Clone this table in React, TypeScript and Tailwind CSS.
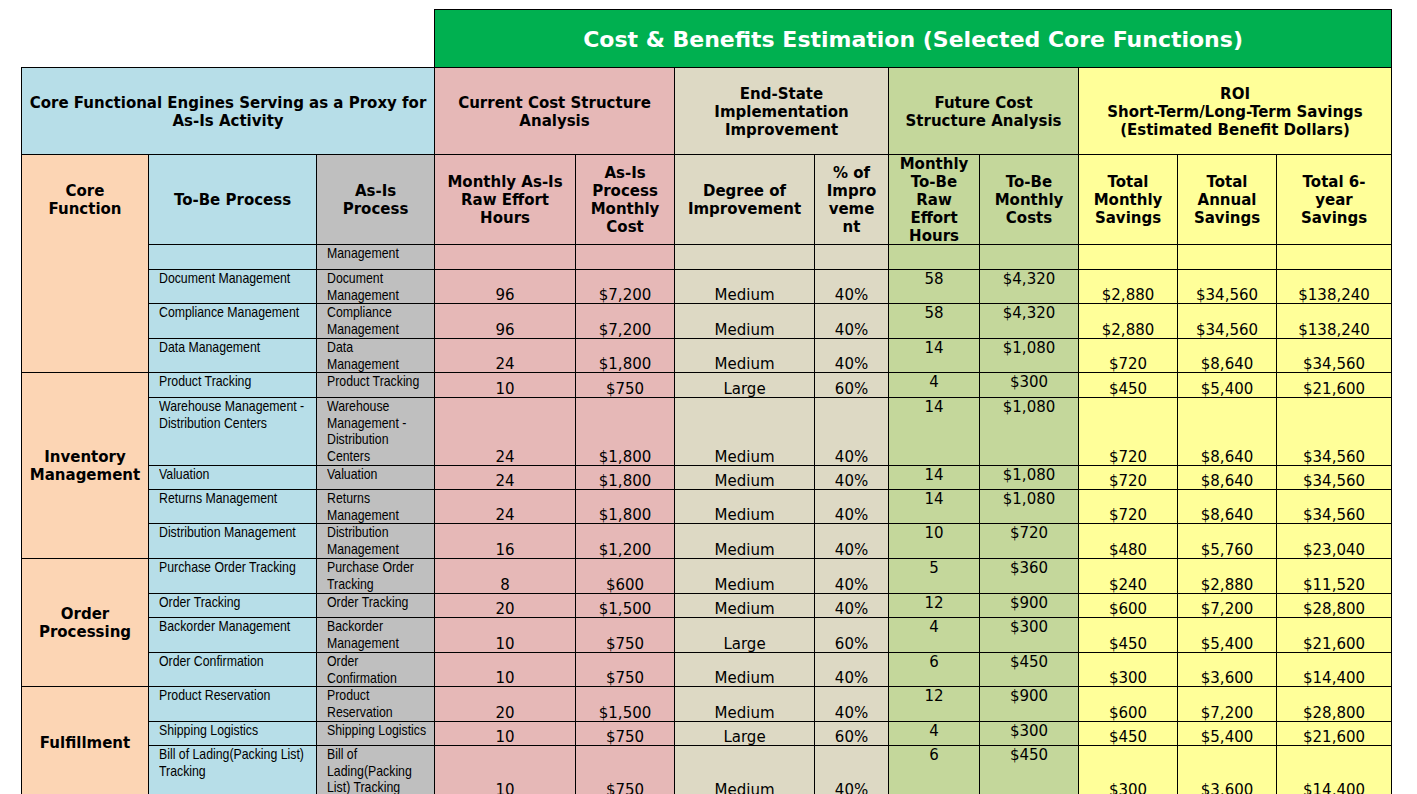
import React from "react";

type Row = {
  h: string;
  tobe: string[];
  asis: string[];
  v: string[];
};

const rows: Row[] = [
  { h: "h-[25px]", tobe: [], asis: ["Management"], v: ["", "", "", "", "", "", "", "", ""] },
  { h: "h-[34px]", tobe: ["Document Management"], asis: ["Document", "Management"], v: ["96", "$7,200", "Medium", "40%", "58", "$4,320", "$2,880", "$34,560", "$138,240"] },
  { h: "h-[35px]", tobe: ["Compliance Management"], asis: ["Compliance", "Management"], v: ["96", "$7,200", "Medium", "40%", "58", "$4,320", "$2,880", "$34,560", "$138,240"] },
  { h: "h-[34px]", tobe: ["Data Management"], asis: ["Data", "Management"], v: ["24", "$1,800", "Medium", "40%", "14", "$1,080", "$720", "$8,640", "$34,560"] },
  { h: "h-[25px]", tobe: ["Product Tracking"], asis: ["Product Tracking"], v: ["10", "$750", "Large", "60%", "4", "$300", "$450", "$5,400", "$21,600"] },
  { h: "h-[68px]", tobe: ["Warehouse Management -", "Distribution Centers"], asis: ["Warehouse", "Management -", "Distribution", "Centers"], v: ["24", "$1,800", "Medium", "40%", "14", "$1,080", "$720", "$8,640", "$34,560"] },
  { h: "h-[24px]", tobe: ["Valuation"], asis: ["Valuation"], v: ["24", "$1,800", "Medium", "40%", "14", "$1,080", "$720", "$8,640", "$34,560"] },
  { h: "h-[34px]", tobe: ["Returns Management"], asis: ["Returns", "Management"], v: ["24", "$1,800", "Medium", "40%", "14", "$1,080", "$720", "$8,640", "$34,560"] },
  { h: "h-[35px]", tobe: ["Distribution Management"], asis: ["Distribution", "Management"], v: ["16", "$1,200", "Medium", "40%", "10", "$720", "$480", "$5,760", "$23,040"] },
  { h: "h-[35px]", tobe: ["Purchase Order Tracking"], asis: ["Purchase Order", "Tracking"], v: ["8", "$600", "Medium", "40%", "5", "$360", "$240", "$2,880", "$11,520"] },
  { h: "h-[24px]", tobe: ["Order Tracking"], asis: ["Order Tracking"], v: ["20", "$1,500", "Medium", "40%", "12", "$900", "$600", "$7,200", "$28,800"] },
  { h: "h-[35px]", tobe: ["Backorder Management"], asis: ["Backorder", "Management"], v: ["10", "$750", "Large", "60%", "4", "$300", "$450", "$5,400", "$21,600"] },
  { h: "h-[34px]", tobe: ["Order Confirmation"], asis: ["Order", "Confirmation"], v: ["10", "$750", "Medium", "40%", "6", "$450", "$300", "$3,600", "$14,400"] },
  { h: "h-[35px]", tobe: ["Product Reservation"], asis: ["Product", "Reservation"], v: ["20", "$1,500", "Medium", "40%", "12", "$900", "$600", "$7,200", "$28,800"] },
  { h: "h-[24px]", tobe: ["Shipping Logistics"], asis: ["Shipping Logistics"], v: ["10", "$750", "Large", "60%", "4", "$300", "$450", "$5,400", "$21,600"] },
  { h: "h-[53px]", tobe: ["Bill of Lading(Packing List)", "Tracking"], asis: ["Bill of", "Lading(Packing", "List) Tracking"], v: ["10", "$750", "Medium", "40%", "6", "$450", "$300", "$3,600", "$14,400"] },
];

const groups: Record<number, { span: number; lines: string[] }> = {
  4: { span: 5, lines: ["Inventory", "Management"] },
  9: { span: 4, lines: ["Order", "Processing"] },
  13: { span: 3, lines: ["Fulfillment"] },
};

const cell = "border border-black p-0";
const narrow = "font-['Liberation_Sans','Arial',sans-serif] text-[15px] leading-[16.5px] whitespace-nowrap";
const numTop = "font-['DejaVu_Sans','Verdana',sans-serif] text-[15px] leading-[18px] text-center whitespace-nowrap align-top";
const numBot = "font-['DejaVu_Sans','Verdana',sans-serif] text-[15px] leading-[16px] text-center whitespace-nowrap align-bottom";
const head = "font-['DejaVu_Sans','Verdana',sans-serif] font-bold text-[15px] leading-[18px] text-center whitespace-nowrap";

function Lines({ lines }: { lines: string[] }) {
  return (
    <>
      {lines.map((l, i) => (
        <div key={i}>{l}</div>
      ))}
    </>
  );
}

function NarrowLines({ lines }: { lines: string[] }) {
  return (
    <>
      {lines.map((l, i) => (
        <div key={i} className="origin-left scale-x-[0.82] whitespace-nowrap">
          {l}
        </div>
      ))}
    </>
  );
}

function Head({ lines, h }: { lines: string[]; h: string }) {
  return (
    <div className={`${h} flex flex-col items-center justify-center`}>
      <Lines lines={lines} />
    </div>
  );
}

export default function App() {
  return (
    <div className="w-[1417px] h-[794px] overflow-hidden bg-white pl-[21px] pt-[9px] text-black">
      <table className="table-fixed border-collapse w-[1371px]">
        <colgroup>
          <col className="w-[127px]" />
          <col className="w-[168px]" />
          <col className="w-[118px]" />
          <col className="w-[141px]" />
          <col className="w-[99px]" />
          <col className="w-[140px]" />
          <col className="w-[74px]" />
          <col className="w-[91px]" />
          <col className="w-[99px]" />
          <col className="w-[99px]" />
          <col className="w-[99px]" />
          <col className="w-[115px]" />
        </colgroup>
        <tbody>
          <tr className="h-[58px]">
            <td colSpan={3} className="p-0"></td>
            <td
              colSpan={9}
              className={`${cell} bg-[#00b050] text-white font-['DejaVu_Sans','Verdana',sans-serif] font-bold text-[22px] leading-[26px] text-center align-middle whitespace-nowrap pt-[3px]`}
            >
              Cost &amp; Benefits Estimation (Selected Core Functions)
            </td>
          </tr>
          <tr className="h-[87px]">
            <td colSpan={3} className={`${cell} ${head} bg-[#b7dee8] align-middle pt-[2px]`}>
              <Lines lines={["Core Functional Engines Serving as a Proxy for", "As-Is Activity"]} />
            </td>
            <td colSpan={2} className={`${cell} ${head} bg-[#e6b8b7] align-middle pt-[2px]`}>
              <Lines lines={["Current Cost Structure", "Analysis"]} />
            </td>
            <td colSpan={2} className={`${cell} ${head} bg-[#ddd9c4] align-middle pt-[2px]`}>
              <Lines lines={["End-State", "Implementation", "Improvement"]} />
            </td>
            <td colSpan={2} className={`${cell} ${head} bg-[#c4d79b] align-middle pt-[2px]`}>
              <Lines lines={["Future Cost", "Structure Analysis"]} />
            </td>
            <td colSpan={3} className={`${cell} ${head} bg-[#ffff99] align-middle pt-[2px]`}>
              <Lines lines={["ROI", "Short-Term/Long-Term Savings", "(Estimated Benefit Dollars)"]} />
            </td>
          </tr>
          <tr className="h-[90px]">
            <td rowSpan={5} className={`${cell} ${head} bg-[#fcd5b4] align-top`}>
              <Head h="h-[89px]" lines={["Core", "Function"]} />
            </td>
            <td className={`${cell} ${head} bg-[#b7dee8]`}>
              <Head h="h-[86px]" lines={["To-Be Process"]} />
            </td>
            <td className={`${cell} ${head} bg-[#bfbfbf]`}>
              <Head h="h-[86px]" lines={["As-Is", "Process"]} />
            </td>
            <td className={`${cell} ${head} bg-[#e6b8b7]`}>
              <Head h="h-[86px]" lines={["Monthly As-Is", "Raw Effort", "Hours"]} />
            </td>
            <td className={`${cell} ${head} bg-[#e6b8b7]`}>
              <Head h="h-[86px]" lines={["As-Is", "Process", "Monthly", "Cost"]} />
            </td>
            <td className={`${cell} ${head} bg-[#ddd9c4]`}>
              <Head h="h-[86px]" lines={["Degree of", "Improvement"]} />
            </td>
            <td className={`${cell} ${head} bg-[#ddd9c4]`}>
              <Head h="h-[86px]" lines={["% of", "Impro", "veme", "nt"]} />
            </td>
            <td className={`${cell} ${head} bg-[#c4d79b]`}>
              <Head h="h-[86px]" lines={["Monthly", "To-Be", "Raw", "Effort", "Hours"]} />
            </td>
            <td className={`${cell} ${head} bg-[#c4d79b]`}>
              <Head h="h-[86px]" lines={["To-Be", "Monthly", "Costs"]} />
            </td>
            <td className={`${cell} ${head} bg-[#ffff99]`}>
              <Head h="h-[86px]" lines={["Total", "Monthly", "Savings"]} />
            </td>
            <td className={`${cell} ${head} bg-[#ffff99]`}>
              <Head h="h-[86px]" lines={["Total", "Annual", "Savings"]} />
            </td>
            <td className={`${cell} ${head} bg-[#ffff99]`}>
              <Head h="h-[86px]" lines={["Total 6-", "year", "Savings"]} />
            </td>
          </tr>
          {rows.map((r, i) => (
            <tr key={i} className={r.h}>
              {groups[i] && (
                <td rowSpan={groups[i].span} className={`${cell} ${head} bg-[#fcd5b4] align-middle`}>
                  <Lines lines={groups[i].lines} />
                </td>
              )}
              <td className={`${cell} ${narrow} bg-[#b7dee8] align-top pl-[10px]`}>
                <NarrowLines lines={r.tobe} />
              </td>
              <td className={`${cell} ${narrow} bg-[#bfbfbf] align-top pl-[10px]`}>
                <NarrowLines lines={r.asis} />
              </td>
              <td className={`${cell} ${numBot} bg-[#e6b8b7]`}>{r.v[0]}</td>
              <td className={`${cell} ${numBot} bg-[#e6b8b7]`}>{r.v[1]}</td>
              <td className={`${cell} ${numBot} bg-[#ddd9c4]`}>{r.v[2]}</td>
              <td className={`${cell} ${numBot} bg-[#ddd9c4]`}>{r.v[3]}</td>
              <td className={`${cell} ${numTop} bg-[#c4d79b]`}>{r.v[4]}</td>
              <td className={`${cell} ${numTop} bg-[#c4d79b]`}>{r.v[5]}</td>
              <td className={`${cell} ${numBot} bg-[#ffff99]`}>{r.v[6]}</td>
              <td className={`${cell} ${numBot} bg-[#ffff99]`}>{r.v[7]}</td>
              <td className={`${cell} ${numBot} bg-[#ffff99]`}>{r.v[8]}</td>
            </tr>
          ))}
        </tbody>
      </table>
    </div>
  );
}
